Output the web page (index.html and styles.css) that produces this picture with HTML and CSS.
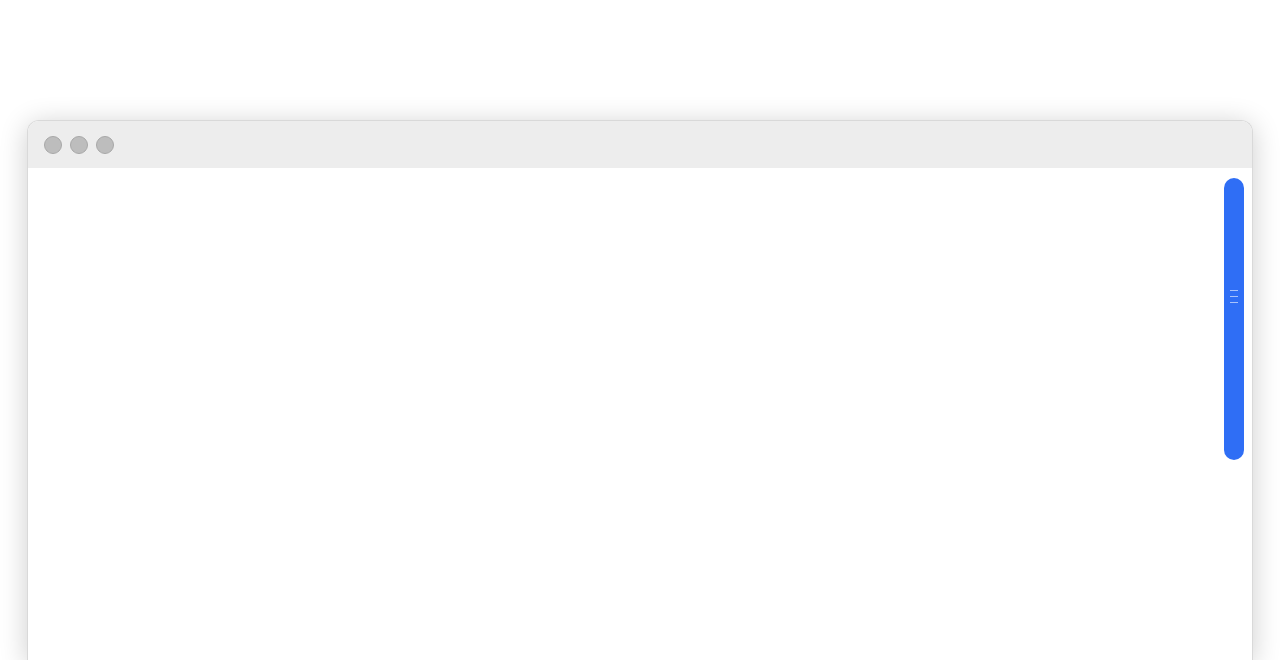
FILE: index.html
```html
<!DOCTYPE html>
<html lang="en">
<head>
    <meta charset="UTF-8">
    <meta name="viewport" content="width=device-width, initial-scale=1.0">
    <title>Window</title>
    <link rel="stylesheet" href="styles.css">
</head>
<body>
    <div class="window">
        <div class="titlebar">
            <span class="dot"></span>
            <span class="dot"></span>
            <span class="dot"></span>
        </div>
        <div class="content">
            <div class="scroll-thumb">
                <span class="grip"></span>
                <span class="grip"></span>
                <span class="grip"></span>
            </div>
        </div>
    </div>
</body>
</html>
```

FILE: styles.css
```css
html, body {
    margin: 0;
    height: 100%;
    overflow: hidden;
    background: #fff;
    font-family: 'Liberation Sans', Arial, sans-serif;
}
body {
    padding: 120px 27px 0;
    box-sizing: border-box;
}
.window {
    height: 540px;
    border: 1px solid #d9d9d9;
    border-bottom: none;
    border-radius: 12px 12px 0 0;
    background: #fff;
    box-shadow: 0 4px 28px rgba(0, 0, 0, 0.2);
    overflow: hidden;
    display: flex;
    flex-direction: column;
}
.titlebar {
    height: 47px;
    background: #ededed;
    display: flex;
    align-items: center;
    gap: 8px;
    padding-left: 16px;
    flex-shrink: 0;
}
.dot {
    width: 16px;
    height: 16px;
    border-radius: 50%;
    background: #bdbdbd;
    border: 1px solid #a8a8a8;
}
.content {
    flex: 1;
    display: flex;
    justify-content: flex-end;
    align-items: flex-start;
    padding: 10px 8px 0 0;
}
.scroll-thumb {
    width: 20px;
    height: 282px;
    border-radius: 10px;
    background: #2f6ef5;
    display: flex;
    flex-direction: column;
    align-items: center;
    gap: 5px;
    padding-top: 112px;
    box-sizing: border-box;
}
.grip {
    width: 8px;
    height: 1px;
    background: #a9c3fb;
}
```
